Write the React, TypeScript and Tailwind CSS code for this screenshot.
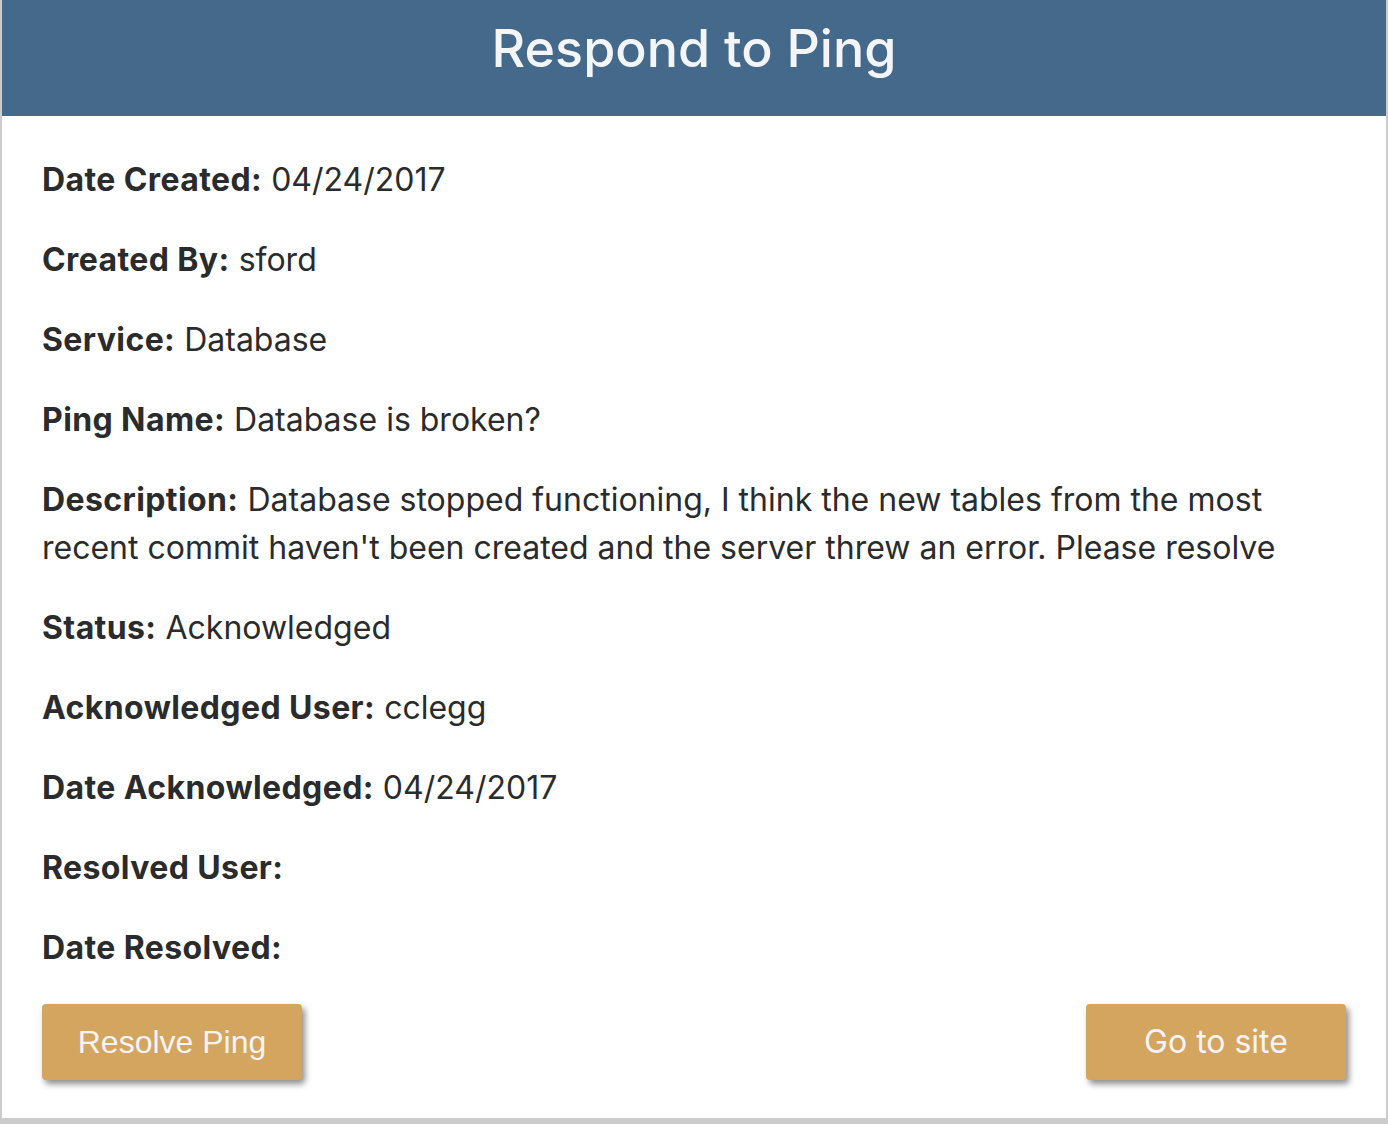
import React from "react";

const rows: { label: string; value?: string }[] = [
  { label: "Date Created:", value: "04/24/2017" },
  { label: "Created By:", value: "sford" },
  { label: "Service:", value: "Database" },
  { label: "Ping Name:", value: "Database is broken?" },
  {
    label: "Description:",
    value:
      "Database stopped functioning, I think the new tables from the most recent commit haven't been created and the server threw an error. Please resolve",
  },
  { label: "Status:", value: "Acknowledged" },
  { label: "Acknowledged User:", value: "cclegg" },
  { label: "Date Acknowledged:", value: "04/24/2017" },
  { label: "Resolved User:" },
  { label: "Date Resolved:" },
];

export default function App() {
  return (
    <div className="w-[1388px] h-[1124px] bg-white overflow-hidden">
      <div className="w-[1388px] h-[1124px] border-l-2 border-r-2 border-b-[6px] border-[#cccccc] bg-white flex flex-col">
        <div className="h-[116px] bg-[#44698b] flex justify-center pt-[18px] shrink-0">
          <h1
            className="text-[52px] leading-[62px] font-medium text-[#f3f5f8]"
            style={{ fontFamily: "Inter, 'Noto Sans', sans-serif" }}
          >
            Respond to Ping
          </h1>
        </div>
        <div
          className="px-[40px] pt-[40px] text-[#292b2c]"
          style={{ fontFamily: "Inter, 'Noto Sans', sans-serif" }}
        >
          {rows.map((r) => (
            <p key={r.label} className="text-[32px] leading-[48px] mb-[32px]">
              <span className="font-bold tracking-[0.4px]">{r.label}</span>
              {r.value ? <span>{" " + r.value}</span> : null}
            </p>
          ))}
          <div className="flex justify-between">
            <button
              className="w-[260px] h-[76px] rounded-[4px] bg-[#d4a55f] text-[#f4f4f8] text-[32px] shadow-[3px_4px_6px_rgba(0,0,0,0.45)]"
              style={{ fontFamily: "'Liberation Sans', Arial, sans-serif" }}
            >
              Resolve Ping
            </button>
            <button
              className="w-[260px] h-[76px] rounded-[4px] bg-[#d4a55f] text-[#f4f4f8] text-[32px] shadow-[3px_4px_6px_rgba(0,0,0,0.45)]"
              style={{ fontFamily: "Inter, 'Noto Sans', sans-serif" }}
            >
              Go to site
            </button>
          </div>
        </div>
      </div>
    </div>
  );
}
